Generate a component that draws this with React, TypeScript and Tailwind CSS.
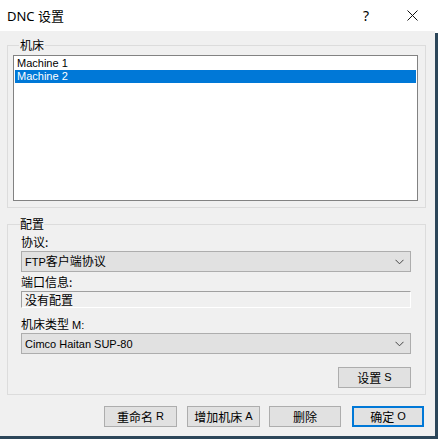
import React from "react";

const cjk = "font-['Noto_Sans_CJK_SC',sans-serif]";

function Chevron() {
  return (
    <svg width="9" height="6" viewBox="0 0 9 6" className="shrink-0">
      <polyline points="0.5,0.8 4.5,4.8 8.5,0.8" fill="none" stroke="#444" strokeWidth="1" />
    </svg>
  );
}

function Combo({ children }: { children: React.ReactNode }) {
  return (
    <div className="flex h-[21px] items-center justify-between border border-[#adadad] bg-[#e1e1e1] pl-[3px] pr-[6px]">
      <div className="leading-[14px]">{children}</div>
      <Chevron />
    </div>
  );
}

function Btn({ children, w, def }: { children: React.ReactNode; w: number; def?: boolean }) {
  return (
    <div
      style={{ width: w }}
      className={
        "flex h-[21px] items-center justify-center bg-[#e1e1e1] " +
        (def ? "border-2 border-[#0078d7]" : "border border-[#adadad]")
      }
    >
      {children}
    </div>
  );
}

const C = ({ children }: { children: React.ReactNode }) => (
  <span className={"text-[12px] " + cjk}>{children}</span>
);

export default function App() {
  return (
    <div className="flex h-[439px] w-[438px] flex-col bg-white font-['Liberation_Sans',Arial,sans-serif] text-[11px] text-black">
      {/* title bar */}
      <div className="flex h-[31px] shrink-0 items-center bg-white">
        <div className={"pl-[7px] text-[13px] font-['Noto_Sans','Noto_Sans_CJK_SC',sans-serif] leading-[16px] flex-1"}>
          DNC 设置
        </div>
        <div className="flex h-full w-[46px] items-center justify-center text-[14px] font-['Noto_Sans',sans-serif]">?</div>
        <div className="mr-[3px] flex h-full w-[46px] items-center justify-center">
          <svg width="11" height="11" viewBox="0 0 11 11">
            <line x1="0.5" y1="0.5" x2="10.5" y2="10.5" stroke="#111" strokeWidth="1" />
            <line x1="10.5" y1="0.5" x2="0.5" y2="10.5" stroke="#111" strokeWidth="1" />
          </svg>
        </div>
      </div>

      <div className="flex flex-1">
        {/* body */}
        <div className="flex w-[435px] flex-col bg-[#f0f0f0] pl-[7px] pr-[9px] pt-[8px]">
          {/* group 1 */}
          <fieldset className="h-[169px] border border-[#dcdcdc] pb-[7px] pl-[5px] pr-[7px]">
            <legend className="ml-[6px] px-[1px] leading-[12px]">
              <C>机床</C>
            </legend>
            <div className="mt-[3px] h-[146px] border border-[#828282] bg-white p-[1px] leading-[13px]">
              <div className="h-[13px] pl-[2px]">Machine 1</div>
              <div className="h-[13px] bg-[#0078d7] pl-[2px] text-white">Machine 2</div>
            </div>
          </fieldset>

          {/* group 2 */}
          <fieldset className="mt-[10px] h-[177px] border border-[#dcdcdc] pl-[13px] pr-[14px]">
            <legend className="ml-[-1px] px-[0px] leading-[12px]">
              <C>配置</C>
            </legend>
            <div className="mt-[4px] h-[14px] leading-[14px]">
              <C>协议:</C>
            </div>
            <div className="mt-[2px]">
              <Combo>
                FTP<C>客户端协议</C>
              </Combo>
            </div>
            <div className="mt-[3px] h-[14px] leading-[14px]">
              <C>端口信息:</C>
            </div>
            <div className="mt-[2px] flex h-[17px] items-center border border-b-white border-l-[#a0a0a0] border-r-white border-t-[#a0a0a0] pl-[3px]">
              <C>没有配置</C>
            </div>
            <div className="mt-[9px] h-[14px] leading-[14px]">
              <C>机床类型</C> M:
            </div>
            <div className="mt-[2px]">
              <Combo>Cimco Haitan SUP-80</Combo>
            </div>
            <div className="mt-[13px] flex justify-end">
              <Btn w={73}>
                <C>设置</C>&nbsp;S
              </Btn>
            </div>
          </fieldset>

          {/* buttons */}
          <div className="mt-[11px] flex justify-end pr-[2px]">
            <Btn w={73}>
              <C>重命名</C>&nbsp;R
            </Btn>
            <div className="w-[10px]" />
            <Btn w={73}>
              <C>增加机床</C>&nbsp;A
            </Btn>
            <div className="w-[9px]" />
            <Btn w={72}>
              <C>删除</C>
            </Btn>
            <div className="w-[11px]" />
            <Btn w={72} def>
              <C>确定</C>&nbsp;O
            </Btn>
          </div>
        </div>
        <div className="mt-[2px] w-[3px] bg-[#2c4659]" />
      </div>
      <div className="h-[3px] shrink-0 bg-[#2c4659]" />
    </div>
  );
}
